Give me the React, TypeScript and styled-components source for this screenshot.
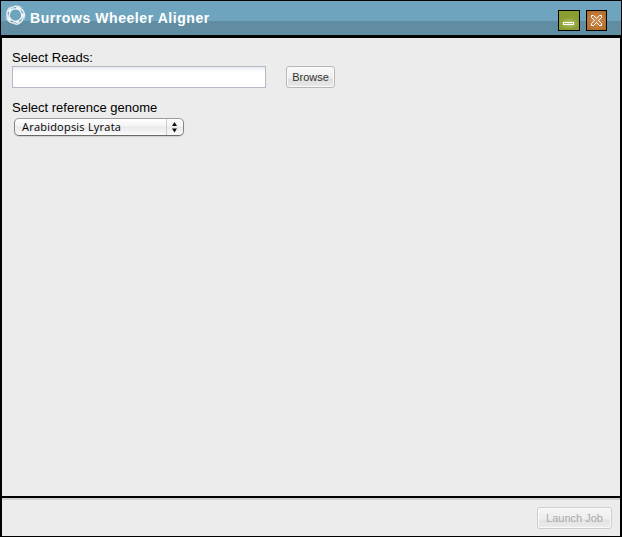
import React from "react";
import styled, { createGlobalStyle } from "styled-components";

const GlobalStyle = createGlobalStyle`
  * { box-sizing: border-box; }
  body { margin: 0; background: #000; }
`;

const Window = styled.main`
  width: 622px;
  height: 537px;
  padding: 1px;
  display: flex;
  flex-direction: column;
  background: #000;
  font-family: "Liberation Sans", Arial, sans-serif;
  color: #000;
`;

const TitleBar = styled.header`
  height: 34px;
  flex: none;
  display: flex;
  align-items: flex-start;
  padding: 3px 14px 0 4px;
  background: linear-gradient(#6fa4be 0 20px, #608da1 20px 100%);
`;

const Title = styled.h1`
  margin: 6px 0 0 4px;
  flex: 1;
  font-size: 14px;
  line-height: 17px;
  font-weight: bold;
  letter-spacing: 0.57px;
  color: #fff;
  white-space: nowrap;
`;

const WindowButton = styled.button<{ $tone: "green" | "orange" }>`
  width: ${(p) => (p.$tone === "green" ? 22 : 21)}px;
  height: 21px;
  margin: 6px 0 0 ${(p) => (p.$tone === "green" ? 0 : 6)}px;
  padding: 0;
  border: 1px solid #000;
  display: flex;
  background: ${(p) =>
    p.$tone === "green"
      ? "radial-gradient(ellipse 10px 6px at 50% 65%, #b5c271, #8a9d33)"
      : "radial-gradient(circle 11px at 50% 50%, #d29358, #b46c29)"};
`;

const Body = styled.section`
  flex: none;
  height: 458px;
  margin: 3px 1px 0;
  padding: 12px 10px;
  background: #ececec;
`;

const Label = styled.label`
  display: block;
  height: 16px;
  font-size: 13px;
  line-height: 16px;
  white-space: nowrap;
`;

const ReadsRow = styled.div`
  display: flex;
  gap: 20px;
  margin-bottom: 12px;
`;

const TextField = styled.input`
  width: 254px;
  height: 22px;
  padding: 0 4px;
  border: 1px solid #b5b8c8;
  border-radius: 0;
  outline: none;
  background: linear-gradient(#e6ebef, #fff 5px);
`;

const Button = styled.button<{ $width: number }>`
  width: ${(p) => p.$width}px;
  height: 22px;
  padding: 0;
  border: 1px solid #b7b7b7;
  border-radius: 3px;
  box-shadow: inset 0 0 0 1px #fafafa;
  background: linear-gradient(#fafafa, #eeeeee 11px, #dedede 12px, #e9e9e9);
  color: #333;
  font: 11px/20px "Liberation Sans", Arial, sans-serif;
  white-space: nowrap;

  &:disabled {
    color: #aaa;
    border-color: #cdcdcd;
    background: linear-gradient(#f5f5f5, #eeeeee 11px, #e3e3e3 12px, #ebebeb);
  }
`;

const GenomeSelect = styled.button`
  width: 170px;
  height: 18px;
  margin: 2px 0 0 2px;
  padding: 0 0 0 7px;
  display: flex;
  align-items: center;
  justify-content: space-between;
  border: 1px solid #858585;
  border-top-color: #9c9c9c;
  border-bottom-color: #696969;
  border-radius: 5px;
  box-shadow: 0 1px 1px #cfcfcf;
  background: linear-gradient(#fff, #f4f4f4 7px, #e9e9e9 8px, #fbfbfb);
  color: #000;
  font: 11px/16px "Open Sans", "Lucida Grande", sans-serif;
`;

const SelectValue = styled.span`
  letter-spacing: 0.22px;
  white-space: nowrap;
`;

const Stepper = styled.span`
  width: 17px;
  height: 16px;
  border-left: 1px solid #cbcbcb;
  display: flex;
`;

const Footer = styled.footer`
  height: 38px;
  flex: none;
  margin: 2px 1px 0;
  padding: 7px 8px 0 0;
  border-top: 2px solid #d2d0d0;
  display: flex;
  justify-content: flex-end;
  background: #ececec;
`;

function Logo() {
  return (
    <svg width="21" height="22" viewBox="0 0 21 22" fill="#fff">
      {[0, 72, 144, 216, 288].map((angle) => (
        <path
          key={angle}
          d="M2.8 7.200C5.500 1.200 13 -.8 18.300 4.300C13.500 2 8.500 2.200 5.600 5.600C9.500 3.400 14.200 4 16.500 7.600C12.500 4.600 7.600 4.600 4.400 8.800Z"
          opacity=".85"
          transform={`rotate(${angle} 10.5 11)`}
        />
      ))}
    </svg>
  );
}

export default function App() {
  return (
    <>
      <GlobalStyle />
      <Window>
        <TitleBar>
          <Logo />
          <Title>Burrows Wheeler Aligner</Title>
          <WindowButton $tone="green" aria-label="Minimize">
            <svg width="20" height="19" fill="none">
              <rect x="4.5" y="11.5" width="10" height="2" stroke="#fff" />
            </svg>
          </WindowButton>
          <WindowButton $tone="orange" aria-label="Close">
            <svg width="19" height="19" fill="none">
              <path
                d="M4.5 4.500h2l3 3 3-3h2v2l-3 3 3 3v2h-2l-3-3-3 3h-2v-2l3-3-3-3z"
                stroke="#fff"
              />
            </svg>
          </WindowButton>
        </TitleBar>
        <Body>
          <Label htmlFor="reads">Select Reads:</Label>
          <ReadsRow>
            <TextField id="reads" />
            <Button $width={49}>Browse</Button>
          </ReadsRow>
          <Label htmlFor="genome">Select reference genome</Label>
          <GenomeSelect id="genome">
            <SelectValue>Arabidopsis Lyrata</SelectValue>
            <Stepper>
              <svg width="16" height="16" fill="#111">
                <path d="M5 7 7.5 3 10 7zM5 9.500h5L7.500 13.500z" />
              </svg>
            </Stepper>
          </GenomeSelect>
        </Body>
        <Footer>
          <Button disabled $width={75}>Launch Job</Button>
        </Footer>
      </Window>
    </>
  );
}
